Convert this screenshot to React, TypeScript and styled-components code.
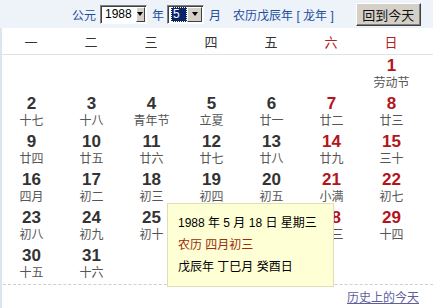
import React, { FC } from "react";
import styled, { createGlobalStyle } from "styled-components";

const GlobalStyle = createGlobalStyle`
  html, body {
    margin: 0;
    padding: 0;
    background: #fff;
  }
  body {
    font-family: "Liberation Sans", "Noto Sans CJK SC", sans-serif;
  }
`;

const Calendar = styled.div`
  position: relative;
  width: 433px;
  height: 308px;
  overflow: hidden;
  background: #fff;
  box-shadow: inset 2px 0 0 #dce6f2;
`;

const Toolbar = styled.div`
  height: 28px;
  display: flex;
  align-items: center;
  padding-left: 72px;
  background: #eef2f9;
  font-size: 12px;
  color: #1d4f9e;
`;

const Label = styled.span<{ $gap?: number }>`
  margin-right: ${(p) => p.$gap ?? 4}px;
  white-space: pre;
`;

const Select = styled.span<{ $width: number }>`
  display: inline-flex;
  align-items: stretch;
  box-sizing: border-box;
  width: ${(p) => p.$width}px;
  height: 19px;
  margin-right: 5px;
  background: #fff;
  border-top: 1px solid #808080;
  border-left: 1px solid #808080;
  border-right: 1px solid #fff;
  border-bottom: 1px solid #fff;
  box-shadow: inset 1px 1px 0 #404040;
  padding: 1px 1px 1px 2px;
`;

const SelectValue = styled.span<{ $active?: boolean }>`
  flex: 1;
  display: flex;
  align-items: stretch;
  font-size: 12px;
  color: #000;
  padding-left: 1px;
  > em {
    display: flex;
    align-items: center;
    font-style: normal;
    padding: ${(p) => (p.$active ? "0 7px 0 2px" : "0 4px 0 1px")};
    background: ${(p) => (p.$active ? "#0a246a" : "transparent")};
    color: ${(p) => (p.$active ? "#fff" : "#000")};
    outline: ${(p) => (p.$active ? "1px dotted #ffd" : "none")};
    outline-offset: -1px;
  }
`;

const Arrow = styled.span`
  width: 15px;
  box-sizing: border-box;
  background: #d4d0c8;
  border-top: 1px solid #fff;
  border-left: 1px solid #fff;
  border-right: 1px solid #404040;
  border-bottom: 1px solid #404040;
  display: flex;
  align-items: center;
  justify-content: center;
  &::after {
    content: "";
    border-left: 3.5px solid transparent;
    border-right: 3.5px solid transparent;
    border-top: 4px solid #000;
  }
`;

const TodayButton = styled.button`
  margin-left: 18px;
  width: 65px;
  height: 23px;
  padding: 0;
  background: #d4d0c8;
  border: 1px solid;
  border-color: #fff #404040 #404040 #fff;
  box-shadow: inset -1px -1px 0 #808080;
  font-family: "Liberation Sans", "Noto Sans CJK SC", sans-serif;
  font-size: 13px;
  color: #111;
`;

const WeekHead = styled.div`
  display: grid;
  grid-template-columns: repeat(7, 60px);
  height: 26px;
  border-bottom: 1px solid #dde3ea;
  margin-left: 2px;
`;

const WeekName = styled.div<{ $weekend?: boolean }>`
  display: flex;
  align-items: center;
  justify-content: center;
  font-size: 13px;
  color: ${(p) => (p.$weekend ? "#b02020" : "#333")};
  margin-left: -2px;
`;

const Grid = styled.div`
  display: grid;
  grid-template-columns: repeat(7, 60px);
  grid-auto-rows: 38px;
  padding-top: 1px;
  border-bottom: 1px dashed #cfcfcf;
  margin-left: 3px;
`;

const Day = styled.div`
  display: flex;
  flex-direction: column;
  align-items: center;
  margin-left: -3px;
`;

const DayNum = styled.span<{ $weekend?: boolean }>`
  font-size: 17px;
  font-weight: bold;
  line-height: 19px;
  color: ${(p) => (p.$weekend ? "#b3141c" : "#333")};
`;

const Lunar = styled.span`
  font-size: 12px;
  line-height: 16px;
  color: #555;
`;

const Footer = styled.div`
  display: flex;
  justify-content: flex-end;
  padding: 5px 14px 0 0;
`;

const HistoryLink = styled.a`
  font-size: 12px;
  line-height: 16px;
  color: #5f5fa0;
  text-decoration: underline;
`;

const Tooltip = styled.div`
  position: absolute;
  left: 167px;
  top: 203px;
  width: 167px;
  box-sizing: border-box;
  padding: 8px 0 8px 10px;
  background: #ffffd6;
  border: 1px solid #e3ddb4;
  font-size: 12px;
  line-height: 22px;
  color: #000;
  white-space: pre;
`;

const TipLine = styled.div<{ $lunar?: boolean }>`
  color: ${(p) => (p.$lunar ? "#9c2c0c" : "#000")};
`;

const weekNames = ["一", "二", "三", "四", "五", "六", "日"];

const lunar: string[] = [
  "劳动节", "十七", "十八", "青年节", "立夏", "廿一", "廿二", "廿三",
  "廿四", "廿五", "廿六", "廿七", "廿八", "廿九", "三十",
  "四月", "初二", "初三", "初四", "初五", "小满", "初七",
  "初八", "初九", "初十", "十一", "十二", "十三", "十四",
  "十五", "十六",
];

// 1988-05-01 is a Sunday, so six empty cells before it
const offset = 6;

const App: FC = () => {
  const cells: (number | null)[] = [];
  for (let i = 0; i < offset; i++) cells.push(null);
  for (let d = 1; d <= 31; d++) cells.push(d);
  while (cells.length < 42) cells.push(null);

  return (
    <>
      <GlobalStyle />
      <Calendar>
        <Toolbar>
          <Label>公元</Label>
          <Select $width={47}>
            <SelectValue>
              <em>1988</em>
            </SelectValue>
            <Arrow />
          </Select>
          <Label $gap={3}>年</Label>
          <Select $width={37}>
            <SelectValue $active>
              <em>5</em>
            </SelectValue>
            <Arrow />
          </Select>
          <Label $gap={12}>月</Label>
          <Label>农历戊辰年 [ 龙年 ]</Label>
          <TodayButton type="button">回到今天</TodayButton>
        </Toolbar>
        <WeekHead>
          {weekNames.map((w, i) => (
            <WeekName key={w} $weekend={i >= 5}>
              {w}
            </WeekName>
          ))}
        </WeekHead>
        <Grid>
          {cells.map((d, i) => (
            <Day key={i}>
              {d !== null && (
                <>
                  <DayNum $weekend={i % 7 >= 5}>{d}</DayNum>
                  <Lunar>{lunar[d - 1]}</Lunar>
                </>
              )}
            </Day>
          ))}
        </Grid>
        <Footer>
          <HistoryLink href="#">历史上的今天</HistoryLink>
        </Footer>
        <Tooltip>
          <TipLine>1988 年 5 月 18 日 星期三</TipLine>
          <TipLine $lunar>农历 四月初三</TipLine>
          <TipLine>戊辰年 丁巳月 癸酉日</TipLine>
        </Tooltip>
      </Calendar>
    </>
  );
};

export default App;
